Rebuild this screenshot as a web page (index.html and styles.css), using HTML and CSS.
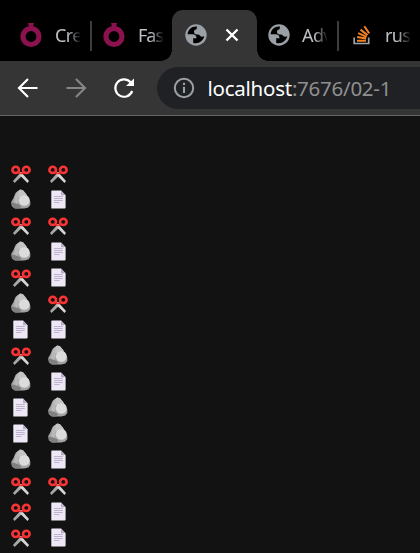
FILE: index.html
```
<!DOCTYPE html>
<html lang="en">
<head>
<meta charset="utf-8">
<title>localhost:7676/02-1</title>
<link rel="stylesheet" href="styles.css">
</head>
<body>
<svg class="defs" aria-hidden="true">
  <symbol id="ring" viewBox="0 0 24 26"><path d="M8 1h6l-1.3 5h-3.4z" fill="#8b114f"/><circle cx="11" cy="14.5" r="8" fill="none" stroke="#8b114f" stroke-width="5.2"/></symbol>
  <symbol id="globe" viewBox="0 0 22 22"><circle cx="11" cy="11" r="10.7" fill="#9aa0a6"/><path class="sea" d="M12 2.6C6.8 2.1 3 5.7 2.6 10.2H7.500c2.700 0 4 1.400 4 4.100H8.200v4.700c5.500 1.400 10.300-2.300 11.100-6.900-.8.700-1.900.9-3.100.5-1.500-.5-1.600-1.900-3.200-2-2.300-.1-4-.7-4-2.700 0-1.700 1.200-2.400 2.600-2.600z"/></symbol>
  <symbol id="scissors" viewBox="0 0 20 19"><path d="M11.8 8 10 7l-8 9 1.5 2L12 10z" fill="#a8a8a8"/><path d="M8.2 8 10 7l8 9-1.5 2L8.5 10z" fill="#d6d6d6"/><g fill="none" stroke="#fa3434" stroke-width="2.6"><ellipse cx="4.7" cy="4.9" rx="3.3" ry="3.1"/><ellipse cx="15.3" cy="4.9" rx="3.3" ry="3.1"/></g><path d="m7 7 2.7 2M13 7l-2.7 2" stroke="#ed3030" stroke-width="2"/></symbol>
  <symbol id="rock" viewBox="0 0 20 20"><path d="M9.2.5 12 1.2l3 3.6 2 3.200 2.300 4.500v3.500l-2 2.500-4 1H4L1 17.500l-.8-4.500L2.500 9l2-5z" fill="#a3a3a3"/><path d="m9.200.5 2.800.7 3 3.600 1 2-3.500-.5-4 2.200L4 8l2-5z" fill="#c4c4c4"/><circle cx="13.300" cy="11.400" r="5.400" fill="#dcdcdc"/><path d="m.2 13.500 6 1.200 4 2.600-2 2.200H4L1 17.500z" fill="#808080"/><path d="m4 8 2-5 2-1-1 5 1 5-2 3-3-2z" fill="#b8b8b8"/></symbol>
  <symbol id="paper" viewBox="0 0 15 19"><path d="M1 .4h9l4.600 4.800v12.400a1 1 0 0 1-1 1H1a.7.7 0 0 1-.7-.7V1A.7.7 0 0 1 1 .4z" fill="#eee8f6"/><path d="M10 .4v4.800h4.600z" fill="#b8adc7"/><path d="M3 6.500h8.800M3 8.500h8.800M3 10.500h8.800M3 12.500h5.500" stroke="#b9acc9" stroke-width=".9"/></symbol>
</svg>
<header class="browser">
  <nav class="tabs">
    <div class="tab first"><svg class="ring"><use href="#ring"/></svg><span class="title">Cre</span></div>
    <div class="tab second"><svg class="ring"><use href="#ring"/></svg><span class="title">Fas</span></div>
    <div class="tab active"><svg class="globe"><use href="#globe"/></svg><svg class="close" viewBox="0 0 14 14"><path d="m1.5 1.5 11 11m0-11-11 11" stroke="#fff" stroke-width="2.4"/></svg></div>
    <div class="tab fourth"><svg class="globe"><use href="#globe"/></svg><span class="title">Adv</span></div>
    <div class="tab fifth"><svg class="stack" viewBox="0 0 18 20"><path d="M1.2 12.5v6h14.5v-6" fill="none" stroke="#9da3aa" stroke-width="1.7"/><g stroke="#f48024" stroke-width="2"><path d="M4 15.7h9M4.1 12l9 1.6M5.2 8.2l8.4 3.7M7.5 4.6l7 5.5M11.3 1.2l4.9 7.2"/></g></svg><span class="title">rus</span></div>
  </nav>
  <div class="toolbar">
    <svg class="tool" viewBox="0 0 22 22"><path d="M20.5 11H3M11 2 2 11l9 9" fill="none" stroke="#fff" stroke-width="2.2"/></svg>
    <svg class="tool" viewBox="0 0 22 22"><path d="M1.5 11H19M11 2l9 9-9 9" fill="none" stroke="#858585" stroke-width="2.2"/></svg>
    <svg class="tool" viewBox="0 0 22 22"><path d="M17.5 5.2A8.7 8.7 0 1 0 19.2 14" fill="none" stroke="#fff" stroke-width="2.2"/><path d="M21 1.5V9h-8z" fill="#fff"/></svg>
    <div class="address"><svg class="info" viewBox="0 0 22 22"><circle cx="11" cy="11" r="9.2" fill="none" stroke="#9aa0a6" stroke-width="2"/><path d="M11 9.7V16M11 5.7v2.2" stroke="#9aa0a6" stroke-width="2.1"/></svg><span class="url">localhost<span class="path">:7676/02-1</span></span></div>
  </div>
</header>
<main class="moves" id="moves"></main>
<script src="script.js"></script>
</body>
</html>
```
FILE: styles.css
```
* { box-sizing: border-box; }
body { margin: 0; height: 553px; overflow: hidden; background: #121212; font-family: "Noto Sans", sans-serif; }
svg { display: block; flex: none; }
.defs { display: none; }
.tabs { display: flex; height: 61px; padding-top: 10px; background: #000; }
.tab { position: relative; display: flex; align-items: center; flex: none; height: 51px; color: #bdc1c6; }
.first { width: 90px; padding-left: 20px; }
.second { width: 82px; padding-left: 13px; }
.active { width: 85px; padding-left: 13px; background: #353535; border-radius: 11px 11px 0 0; }
.active::before, .active::after { content: ""; position: absolute; bottom: 0; width: 11px; height: 11px; }
.active::before { left: -11px; background: radial-gradient(circle at 0 0, transparent 10.5px, #353535 11px); }
.active::after { right: -11px; background: radial-gradient(circle at 100% 0, transparent 10.5px, #353535 11px); }
.fourth { width: 81px; padding-left: 11px; }
.fifth { padding-left: 15px; }
.first::after, .fourth::after { content: ""; position: absolute; right: -2px; top: 11px; width: 2px; height: 30px; background: #3d3d3d; }
.fourth::after { right: -1px; }
.ring { width: 24px; height: 26px; margin-top: -2px; }
.globe { width: 22px; height: 22px; margin-top: -2px; }
.sea { fill: #000; }
.active .sea { fill: #353535; }
.close { width: 14px; height: 14px; margin: -2px 0 0 18px; }
.stack { width: 18px; height: 20px; margin-top: -1px; }
.title { width: 25px; margin: -2px 0 0 11px; white-space: nowrap; font-size: 18px; line-height: 26px; letter-spacing: -0.6px; -webkit-mask-image: linear-gradient(90deg, #000 50%, transparent 105%); mask-image: linear-gradient(90deg, #000 50%, transparent 105%); }
.second .title { letter-spacing: -1px; }
.fourth .title { margin-left: 12px; }
.fifth .title { margin-left: 14px; }
.toolbar { display: flex; align-items: center; gap: 26px; height: 55px; padding-left: 17px; background: #353535; border-bottom: 1px solid #656565; }
.tool { width: 22px; height: 22px; margin-top: -1px; }
.address { display: flex; align-items: center; flex: 1; height: 42px; margin-left: -4px; padding-left: 16px; border-radius: 21px 0 0 21px; background: #202124; }
.info { width: 22px; height: 22px; }
.url { margin: 0 0 0 12.5px; color: #fff; font-size: 20.5px; line-height: 30px; letter-spacing: -0.25px; white-space: nowrap; }
.path { color: #8f8f8f; }
.moves { padding: 45px 0 0 10px; }
.pair { display: grid; grid-template-columns: 21px 21px; column-gap: 16.5px; height: 26px; align-items: center; justify-items: center; }
.scissors { width: 20px; height: 19px; }
.rock { width: 20px; height: 20px; margin-top: -2px; }
.paper { width: 15px; height: 19px; margin-top: -1px; }
```
FILE: script.js
```
const names = { s: "scissors", r: "rock", p: "paper" };
const pairs = ["ss", "rp", "ss", "rp", "sp", "rs", "pp", "sr", "rp", "pr", "pr", "rp", "ss", "sp", "sp"];
document.getElementById("moves").innerHTML = pairs.map(pair =>
  `<div class="pair">${[...pair].map(key => `<svg class="${names[key]}"><use href="#${names[key]}"/></svg>`).join("")}</div>`
).join("");
```
